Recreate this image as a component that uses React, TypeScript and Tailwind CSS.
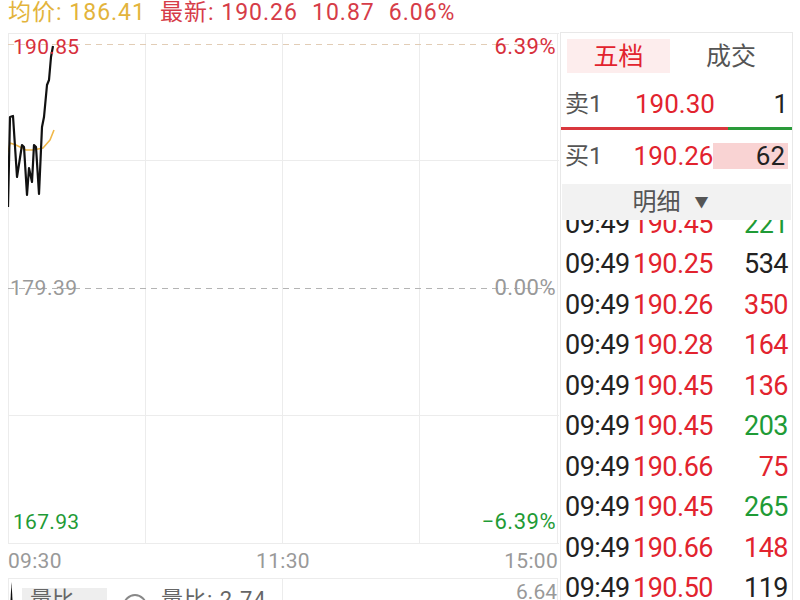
import React from "react";

const rows: { p: string; v: string; c: string }[] = [
  { p: "190.45", v: "221", c: "text-[#1f9b36]" },
  { p: "190.25", v: "534", c: "text-[#222]" },
  { p: "190.26", v: "350", c: "text-[#e2232e]" },
  { p: "190.28", v: "164", c: "text-[#e2232e]" },
  { p: "190.45", v: "136", c: "text-[#e2232e]" },
  { p: "190.45", v: "203", c: "text-[#1f9b36]" },
  { p: "190.66", v: "75", c: "text-[#e2232e]" },
  { p: "190.45", v: "265", c: "text-[#1f9b36]" },
  { p: "190.66", v: "148", c: "text-[#e2232e]" },
  { p: "190.50", v: "119", c: "text-[#222]" },
];

const price =
  "0,174 2,84 5,83 9,144 14,112 16,114 19,162 21,135 24,149 26,112 28,114 31,161 34,94 36,84 39,52 41,47 43,24 45,13";
const avg = "0,119 2,110 8,112 12,114 18,117 25,117 35,115 42,107 46,97";

function Chart() {
  return (
    <div className="ml-[8px] w-[551px] h-[511px] relative shrink-0">
      <svg width="551" height="511" className="absolute left-0 top-0">
        <g stroke="#ececec" strokeWidth="1" fill="none">
          <line x1="0.5" y1="0" x2="0.5" y2="511" />
          <line x1="137.5" y1="0" x2="137.5" y2="511" />
          <line x1="274.5" y1="0" x2="274.5" y2="511" />
          <line x1="411.5" y1="0" x2="411.5" y2="511" />
          <line x1="549.5" y1="0" x2="549.5" y2="511" />
          <line x1="0" y1="0.5" x2="551" y2="0.5" />
          <line x1="0" y1="127.5" x2="551" y2="127.5" />
          <line x1="0" y1="382.5" x2="551" y2="382.5" />
          <line x1="0" y1="510.5" x2="551" y2="510.5" />
        </g>
        <line x1="0" y1="11.5" x2="550" y2="11.5" stroke="#e2cdb6" strokeWidth="1.2" strokeDasharray="6 5" />
        <line x1="0" y1="255.5" x2="550" y2="255.5" stroke="#b4b4b4" strokeWidth="1.2" strokeDasharray="6 5" />
        <polyline points={avg} fill="none" stroke="#f0b84a" strokeWidth="1.6" strokeLinejoin="round" />
        <polyline points={price} fill="none" stroke="#111" strokeWidth="2.2" strokeLinejoin="round" />
      </svg>
      <div className="absolute left-[5px] top-[3px] text-[21px] tracking-[0.3px] leading-[22px] text-[#d7303c]">190.85</div>
      <div className="absolute right-[3px] top-[3px] text-[22px] tracking-[0.5px] leading-[22px] text-[#d7303c]">6.39%</div>
      <div className="absolute left-[2px] top-[244px] text-[21px] tracking-[0.5px] leading-[22px] text-[#999]">179.39</div>
      <div className="absolute right-[3px] top-[244px] text-[22px] tracking-[0.5px] leading-[22px] text-[#999]">0.00%</div>
      <div className="absolute left-[5px] top-[478px] text-[21px] tracking-[0.3px] leading-[22px] text-[#1f9b36]">167.93</div>
      <div className="absolute right-[3px] top-[478px] text-[22px] tracking-[0.5px] leading-[22px] text-[#1f9b36]">−6.39%</div>
    </div>
  );
}

export default function App() {
  return (
    <div className="w-[800px] h-[600px] overflow-hidden bg-white flex font-['Roboto','Noto_Sans_CJK_SC',sans-serif]">
      <div className="w-[560px] shrink-0 flex flex-col">
        <div className="h-[33px] shrink-0 flex items-start pt-[2px] pl-[8px] text-[23px] tracking-[1px] leading-[22px] whitespace-nowrap">
          <span className="text-[#e3b43c]">均价: 186.41</span>
          <span className="ml-[14px] text-[#d63c48]">最新: 190.26</span>
          <span className="ml-[14px] text-[#d63c48]">10.87</span>
          <span className="ml-[14px] text-[#d63c48]">6.06%</span>
        </div>
        <Chart />
        <div className="ml-[8px] w-[550px] h-[35px] shrink-0 flex items-center justify-between border-b border-[#ececec] text-[21px] tracking-[0.3px] text-[#999] leading-none">
          <span>09:30</span>
          <span>11:30</span>
          <span>15:00</span>
        </div>
        <div className="ml-[8px] w-[551px] flex-1 relative">
          <svg width="551" height="30" className="absolute left-0 top-0">
            <line x1="0.5" y1="0" x2="0.5" y2="30" stroke="#ececec" />
            <line x1="274.5" y1="0" x2="274.5" y2="30" stroke="#ececec" />
            <line x1="549.5" y1="0" x2="549.5" y2="30" stroke="#ececec" />
            <path d="M2 30 L3.5 3 L5 30 Z" fill="#111" />
          </svg>
          <div className="relative flex items-start pl-[14px] pt-[9px] text-[22px] leading-[24px] text-[#999]">
            <div className="w-[85px] h-[30px] bg-[#eeeeee] pl-[8px] text-[#666]">量比 ⌄</div>
            <div className="ml-[16px] mt-[6px] w-[24px] h-[24px] rounded-full border-2 border-[#888] shrink-0"></div>
            <div className="ml-[14px] text-[#666] tracking-[1px]">量比: 2.74</div>
          </div>
          <div className="absolute right-[2px] top-[2px] text-[21px] leading-[22px] text-[#999]">6.64</div>
        </div>
      </div>

      <div className="pt-[32px] shrink-0">
        <div className="w-[233px] h-[568px] border-l border-r border-t border-[#e8e8e8] flex flex-col">
          <div className="h-[47px] shrink-0 pt-[6px] pl-[6px] flex">
            <div className="w-[103px] h-[34px] bg-[#fdeded] flex items-center justify-center text-[25px] text-[#e2232e] leading-none">五档</div>
            <div className="flex-1 h-[34px] flex items-center justify-center text-[25px] text-[#555] leading-none">成交</div>
          </div>
          <div className="h-[47px] shrink-0 flex items-center px-[4px] leading-none">
            <span className="w-[70px] text-[24px] text-[#555]">卖1</span>
            <span className="text-[26px] text-[#e2232e]">190.30</span>
            <span className="flex-1 text-right text-[26px] text-[#222]">1</span>
          </div>
          <div className="h-[3px] shrink-0 flex">
            <div className="w-[167px] bg-[#d9373d]"></div>
            <div className="flex-1 bg-[#2a9a3a]"></div>
          </div>
          <div className="h-[52px] shrink-0 flex items-center pl-[4px] leading-none">
            <span className="w-[70px] text-[24px] text-[#555]">买1</span>
            <span className="text-[26px] text-[#e2232e]">190.26</span>
            <div className="flex-1"></div>
            <div className="w-[76px] h-[26px] bg-[#f9d3d3] flex items-center justify-end pr-[3px] text-[26px] text-[#222] mr-[4px]">62</div>
          </div>
          <div className="mt-[2px] mx-[1px] h-[36px] shrink-0 bg-[#f2f2f2] flex items-center justify-center pr-[12px] text-[24px] text-[#555] leading-none">
            <span>明细</span>
            <span className="ml-[14px] text-[14px]">▼</span>
          </div>
          <div className="flex-1 overflow-hidden">
            <div className="-mt-[16px]">
              {rows.map((r, i) => (
                <div key={i} className="h-[40.5px] flex items-center pl-[4px] pr-[4px] text-[27px] tracking-[-0.5px] leading-none">
                  <span className="w-[68px] text-[#222]">09:49</span>
                  <span className="text-[#e2232e]">{r.p}</span>
                  <span className={"flex-1 text-right " + r.c}>{r.v}</span>
                </div>
              ))}
            </div>
          </div>
        </div>
      </div>
    </div>
  );
}
